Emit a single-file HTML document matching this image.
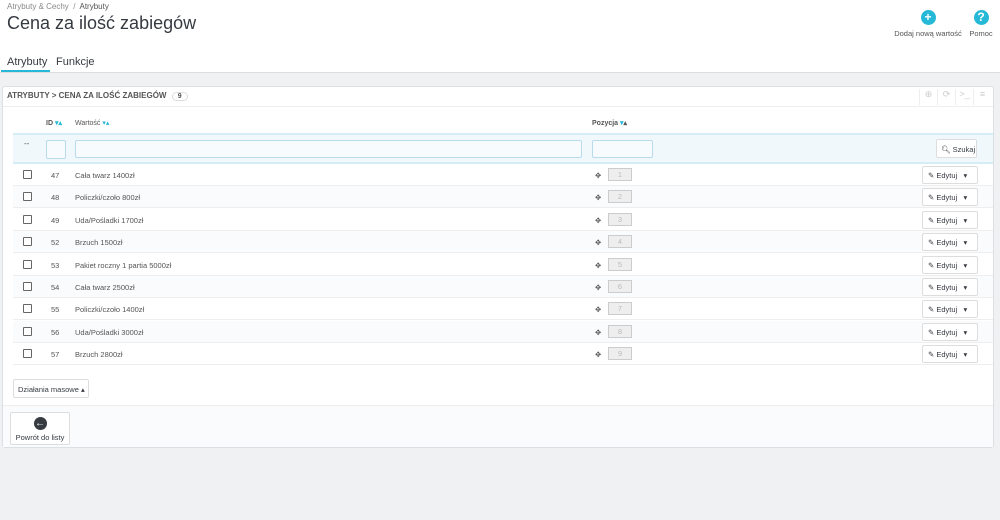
<!DOCTYPE html>
<html><head><meta charset="utf-8"><style>
*{box-sizing:border-box;margin:0;padding:0}
body{width:1000px;height:520px;background:#eff1f2;font-family:"Liberation Sans",sans-serif;color:#555;position:relative;overflow:hidden}
.top{position:absolute;left:0;top:0;width:1000px;height:73px;background:#fff;border-bottom:1px solid #ddd}
.bc{position:absolute;left:7px;top:2px;font-size:8px;color:#888}
.bc b{color:#555;font-weight:normal}
h1{position:absolute;left:7px;top:13px;font-size:18px;font-weight:normal;color:#363a41}
.tab{position:absolute;top:56px;font-size:11px;color:#363a41}
.ul{position:absolute;left:1px;top:70px;width:49px;height:2px;background:#25b9d7}
.tb{position:absolute;top:10px;text-align:center;font-size:7.5px;color:#555;white-space:nowrap}
.ic{width:15px;height:15px;border-radius:50%;background:#25b9d7;color:#fff;font-weight:bold;font-size:12px;line-height:15px;margin:0 auto 4px}
.panel{position:absolute;left:2px;top:86px;width:992px;height:362px;background:#fff;border:1px solid #dde0e3;border-radius:3px}
.ph{height:20px;border-bottom:1px solid #eee;font-size:8px;color:#555;padding:4px 4px;font-weight:bold;white-space:nowrap}
.badge{display:inline-block;border:1px solid #ddd;border-radius:7px;padding:0 5px;margin-left:3px;font-size:7px}
.tools{position:absolute;right:2px;top:2px;display:flex;color:#ccc;font-size:9px}
.tools span{width:18px;height:16px;text-align:center;border-left:1px solid #eee}
.th{position:absolute;top:119px;font-size:7px;font-weight:bold;color:#555;white-space:nowrap}
.th i{color:#25b9d7;font-style:normal}
.filter{position:absolute;left:13px;top:133px;width:980px;height:31px;background:#f0f8fc;border-top:2px solid #d4edf6;border-bottom:2px solid #d4edf6}
.inp{position:absolute;top:5px;height:18px;border:1px solid #b9dcec;background:#f7fbfd;border-radius:2px}
.btn{position:absolute;background:#fff;border:1px solid #ddd;border-radius:2px;font-size:7.5px;color:#363a41;white-space:nowrap}
.row{position:absolute;left:13px;width:980px;height:22px;border-bottom:1px solid #eee;font-size:7.5px;background:#fafbfc;white-space:nowrap}
.row span{position:absolute;top:7px}
.cb{position:absolute;left:10px;top:6px;width:9px;height:9px;border:1px solid #666;border-radius:1px;background:#fff}
.pos{position:absolute;left:595px;top:4px;width:24px;height:13px;border:1px solid #ccc;background:#eee;color:#bbb;text-align:center;font-size:7.5px;line-height:11px}
.ed{position:absolute;left:909px;top:2px;width:56px;height:18px;background:#fff;border:1px solid #ddd;border-radius:2px;font-size:7.5px;color:#363a41;padding:4px 5px;white-space:nowrap}
</style></head><body>
<div class="top">
<div class="bc">Atrybuty &amp; Cechy &nbsp;/&nbsp; <b>Atrybuty</b></div>
<h1>Cena za ilość zabiegów</h1>
<div class="tab" style="left:7px">Atrybuty</div>
<div class="tab" style="left:56px">Funkcje</div>
<div class="ul"></div>
<div class="tb" style="left:893px;width:70px"><div class="ic">+</div>Dodaj nową wartość</div>
<div class="tb" style="left:968px;width:26px"><div class="ic">?</div>Pomoc</div>
</div>
<div class="panel">
<div class="ph">ATRYBUTY &gt; CENA ZA ILOŚĆ ZABIEGÓW <span class="badge">9</span></div>
<div class="tools"><span>⊕</span><span>⟳</span><span>&gt;_</span><span>≡</span></div>
</div>
<div class="th" style="left:46px">ID <i>▾▴</i></div>
<div class="th" style="left:75px;font-weight:normal">Wartość <i>▾▴</i></div>
<div class="th" style="left:592px">Pozycja <i>▾</i>▴</div>
<div class="filter">
<span style="position:absolute;left:11px;top:4px;font-size:8px">--</span>
<div class="inp" style="left:33px;width:20px;height:19px"></div>
<div class="inp" style="left:62px;width:507px"></div>
<div class="inp" style="left:579px;width:61px"></div>
<div class="btn" style="left:923px;top:4px;width:41px;height:19px;padding:5px 4px">&#x1F50D;&#xFE0E; Szukaj</div>
</div>
<div class="row" style="top:164px;background:#fff"><div class="cb"></div><span style="left:38px">47</span><span style="left:62px">Cała twarz 1400zł</span><span style="left:582px">✥</span><div class="pos">1</div><div class="ed">✎ Edytuj &nbsp;&nbsp;▾</div></div>
<div class="row" style="top:186px"><div class="cb"></div><span style="left:38px">48</span><span style="left:62px">Policzki/czoło 800zł</span><span style="left:582px">✥</span><div class="pos">2</div><div class="ed">✎ Edytuj &nbsp;&nbsp;▾</div></div>
<div class="row" style="top:209px;background:#fff"><div class="cb"></div><span style="left:38px">49</span><span style="left:62px">Uda/Pośladki 1700zł</span><span style="left:582px">✥</span><div class="pos">3</div><div class="ed">✎ Edytuj &nbsp;&nbsp;▾</div></div>
<div class="row" style="top:231px"><div class="cb"></div><span style="left:38px">52</span><span style="left:62px">Brzuch 1500zł</span><span style="left:582px">✥</span><div class="pos">4</div><div class="ed">✎ Edytuj &nbsp;&nbsp;▾</div></div>
<div class="row" style="top:254px;background:#fff"><div class="cb"></div><span style="left:38px">53</span><span style="left:62px">Pakiet roczny 1 partia 5000zł</span><span style="left:582px">✥</span><div class="pos">5</div><div class="ed">✎ Edytuj &nbsp;&nbsp;▾</div></div>
<div class="row" style="top:276px"><div class="cb"></div><span style="left:38px">54</span><span style="left:62px">Cała twarz 2500zł</span><span style="left:582px">✥</span><div class="pos">6</div><div class="ed">✎ Edytuj &nbsp;&nbsp;▾</div></div>
<div class="row" style="top:298px;background:#fff"><div class="cb"></div><span style="left:38px">55</span><span style="left:62px">Policzki/czoło 1400zł</span><span style="left:582px">✥</span><div class="pos">7</div><div class="ed">✎ Edytuj &nbsp;&nbsp;▾</div></div>
<div class="row" style="top:321px"><div class="cb"></div><span style="left:38px">56</span><span style="left:62px">Uda/Pośladki 3000zł</span><span style="left:582px">✥</span><div class="pos">8</div><div class="ed">✎ Edytuj &nbsp;&nbsp;▾</div></div>
<div class="row" style="top:343px;background:#fff"><div class="cb"></div><span style="left:38px">57</span><span style="left:62px">Brzuch 2800zł</span><span style="left:582px">✥</span><div class="pos">9</div><div class="ed">✎ Edytuj &nbsp;&nbsp;▾</div></div>
<div class="btn" style="left:13px;top:379px;width:76px;height:19px;padding:5px 4px">Działania masowe ▴</div>
<div style="position:absolute;left:3px;top:405px;width:990px;height:42px;background:#fafbfc;border-top:1px solid #eee"></div>
<div class="btn" style="left:10px;top:412px;width:60px;height:33px;text-align:center;padding-top:4px"><div style="width:13px;height:13px;border-radius:50%;background:#363a41;color:#fff;font-size:10px;line-height:13px;margin:0 auto 3px;font-weight:bold">←</div>Powrót do listy</div>
</body></html>
